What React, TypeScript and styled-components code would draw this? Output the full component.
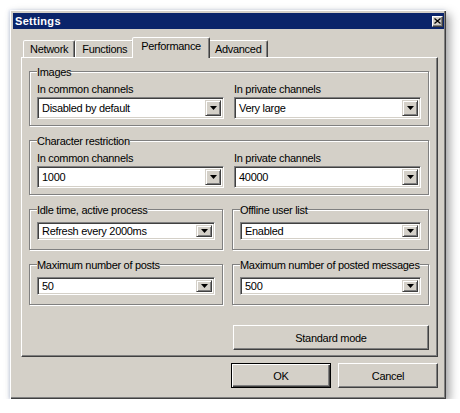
import React from 'react';
import styled, { createGlobalStyle } from 'styled-components';

const FACE = '#d4d0c8';

const Global = createGlobalStyle`
  html, body { margin: 0; padding: 0; background: #fff; }
  body {
    font-family: "Liberation Sans", Arial, sans-serif;
    font-size: 11px;
    letter-spacing: -0.3px;
    color: #000;
  }
  * { box-sizing: border-box; }
`;

const Window = styled.div`
  margin: 10px 0 0 10px;
  width: 436px;
  height: 389px;
  background: ${FACE};
  display: flex;
  flex-direction: column;
  box-shadow:
    inset 1px 1px #fff,
    inset -1px -1px #404040,
    inset -2px -2px #808080,
    4px 4px 9px rgba(0, 0, 0, 0.35),
    -1px 0 3px rgba(140, 160, 210, 0.35);
`;

const TitleBar = styled.div`
  margin: 3px 2px 0 3px;
  height: 16px;
  background: #0a246a;
  display: flex;
  align-items: center;
  justify-content: space-between;
  padding: 0 1px 0 2px;
`;

const TitleText = styled.span`
  color: #fff;
  font-weight: bold;
  font-size: 11px;
  letter-spacing: 0.3px;
  line-height: 16px;
`;

const CloseButton = styled.div`
  width: 11px;
  height: 11px;
  background: ${FACE};
  border: 1px solid;
  border-color: #fff #404040 #404040 #fff;
  box-shadow: inset -1px -1px #808080;
  display: flex;
  align-items: center;
  justify-content: center;
`;

const Body = styled.div`
  flex: 1;
  display: flex;
  flex-direction: column;
  padding: 8px 8px 0 11px;
`;

const TabStrip = styled.div`
  display: flex;
  align-items: flex-end;
  height: 20px;
  padding-left: 2px;
`;

const Tab = styled.div<{ $active?: boolean }>`
  height: ${(p) => (p.$active ? 21 : 17)}px;
  margin: ${(p) => (p.$active ? '0 -2px -1px' : '0')};
  padding: 0 ${(p) => (p.$active ? 8 : 6)}px ${(p) => (p.$active ? 3 : 0)}px;
  position: relative;
  z-index: ${(p) => (p.$active ? 2 : 1)};
  background: ${FACE};
  border: 1px solid;
  border-bottom: none;
  border-color: #fff #404040 transparent #fff;
  border-radius: 2px 2px 0 0;
  box-shadow: inset -1px 0 #808080;
  display: flex;
  align-items: center;
  justify-content: center;
  line-height: 13px;
  white-space: nowrap;
`;

const Panel = styled.div`
  height: 300px;
  border: 1px solid;
  border-color: #fff #404040 #404040 #fff;
  box-shadow: inset -1px -1px #808080;
  padding: 13px 8px 6px 7px;
  display: flex;
  flex-direction: column;
  gap: 14px;
`;

const Group = styled.div<{ $pb: number }>`
  border: 1px solid #808080;
  box-shadow: inset 1px 1px #fff, 1px 1px #fff;
  padding: 0 7px ${(p) => p.$pb}px 7px;
  display: flex;
  flex-direction: column;
  min-width: 0;
`;

const Legend = styled.div`
  align-self: flex-start;
  margin-top: -6px;
  background: ${FACE};
  line-height: 13px;
  white-space: nowrap;
`;

const Columns = styled.div<{ $left?: string; $gap: number }>`
  display: grid;
  grid-template-columns: ${(p) => p.$left ?? '1fr'} 1fr;
  gap: ${(p) => p.$gap}px;
`;

const Field = styled.div`
  display: flex;
  flex-direction: column;
  margin-top: 4px;
  min-width: 0;
`;

const Label = styled.div`
  line-height: 13px;
  white-space: nowrap;
`;

const SelectBox = styled.div<{ $h: number; $mt: number }>`
  height: ${(p) => p.$h}px;
  margin-top: ${(p) => p.$mt}px;
  background: #fff;
  border: 1px solid;
  border-color: #808080 #fff #fff #808080;
  box-shadow: inset 1px 1px #404040, inset -1px -1px ${FACE};
  display: flex;
  align-items: stretch;
  padding: 2px;
`;

const SelectValue = styled.div`
  flex: 1;
  padding-left: 2px;
  display: flex;
  align-items: center;
  white-space: nowrap;
  overflow: hidden;
`;

const ArrowButton = styled.div`
  width: 16px;
  background: ${FACE};
  border: 1px solid;
  border-color: ${FACE} #404040 #404040 ${FACE};
  box-shadow: inset 1px 1px #fff, inset -1px -1px #808080;
  display: flex;
  align-items: center;
  justify-content: center;
`;

const ButtonRow = styled.div<{ $mt: string }>`
  display: flex;
  justify-content: flex-end;
  gap: 7px;
  margin-top: ${(p) => p.$mt};
`;

const Button = styled.button<{ $w: number; $default?: boolean }>`
  width: ${(p) => p.$w}px;
  height: 25px;
  padding: 0;
  font: inherit;
  letter-spacing: inherit;
  color: #000;
  background: ${FACE};
  border: 1px solid;
  border-color: ${(p) => (p.$default ? '#000' : '#fff #404040 #404040 #fff')};
  box-shadow: ${(p) =>
    p.$default
      ? 'inset 1px 1px #fff, inset -1px -1px #404040, inset -2px -2px #808080'
      : 'inset -1px -1px #808080'};
  cursor: default;
`;

const Arrow = () => (
  <svg width="7" height="4" viewBox="0 0 7 4">
    <polygon points="0,0 7,0 3.5,4" fill="#000" />
  </svg>
);

const Select = ({ value, h, mt }: { value: string; h: number; mt: number }) => (
  <SelectBox $h={h} $mt={mt}>
    <SelectValue>{value}</SelectValue>
    <ArrowButton>
      <Arrow />
    </ArrowButton>
  </SelectBox>
);

const LabeledSelect = ({ label, value }: { label: string; value: string }) => (
  <Field>
    <Label>{label}</Label>
    <Select value={value} h={22} mt={1} />
  </Field>
);

const tabs = ['Network', 'Functions', 'Performance', 'Advanced'];

export default function App() {
  return (
    <>
      <Global />
      <Window>
        <TitleBar>
          <TitleText>Settings</TitleText>
          <CloseButton>
            <svg width="7" height="6" viewBox="0 0 7 6">
              <path d="M0.5 0.5 L6.5 5.5 M6.5 0.5 L0.5 5.5" stroke="#000" strokeWidth="1.3" />
            </svg>
          </CloseButton>
        </TitleBar>
        <Body>
          <TabStrip>
            {tabs.map((t) => (
              <Tab key={t} $active={t === 'Performance'}>
                {t}
              </Tab>
            ))}
          </TabStrip>
          <Panel>
            <Group $pb={6}>
              <Legend>Images</Legend>
              <Columns $gap={10}>
                <LabeledSelect label="In common channels" value="Disabled by default" />
                <LabeledSelect label="In private channels" value="Very large" />
              </Columns>
            </Group>
            <Group $pb={6}>
              <Legend>Character restriction</Legend>
              <Columns $gap={10}>
                <LabeledSelect label="In common channels" value="1000" />
                <LabeledSelect label="In private channels" value="40000" />
              </Columns>
            </Group>
            <Columns $left="194px" $gap={9}>
              <Group $pb={9}>
                <Legend>Idle time, active process</Legend>
                <Select value="Refresh every 2000ms" h={18} mt={5} />
              </Group>
              <Group $pb={9}>
                <Legend>Offline user list</Legend>
                <Select value="Enabled" h={18} mt={5} />
              </Group>
            </Columns>
            <Columns $left="194px" $gap={9}>
              <Group $pb={9}>
                <Legend>Maximum number of posts</Legend>
                <Select value="50" h={18} mt={5} />
              </Group>
              <Group $pb={9}>
                <Legend>Maximum number of posted messages</Legend>
                <Select value="500" h={18} mt={5} />
              </Group>
            </Columns>
            <ButtonRow $mt="auto">
              <Button $w={196}>Standard mode</Button>
            </ButtonRow>
          </Panel>
          <ButtonRow $mt="6px">
            <Button $w={100} $default>
              OK
            </Button>
            <Button $w={100}>Cancel</Button>
          </ButtonRow>
        </Body>
      </Window>
    </>
  );
}
